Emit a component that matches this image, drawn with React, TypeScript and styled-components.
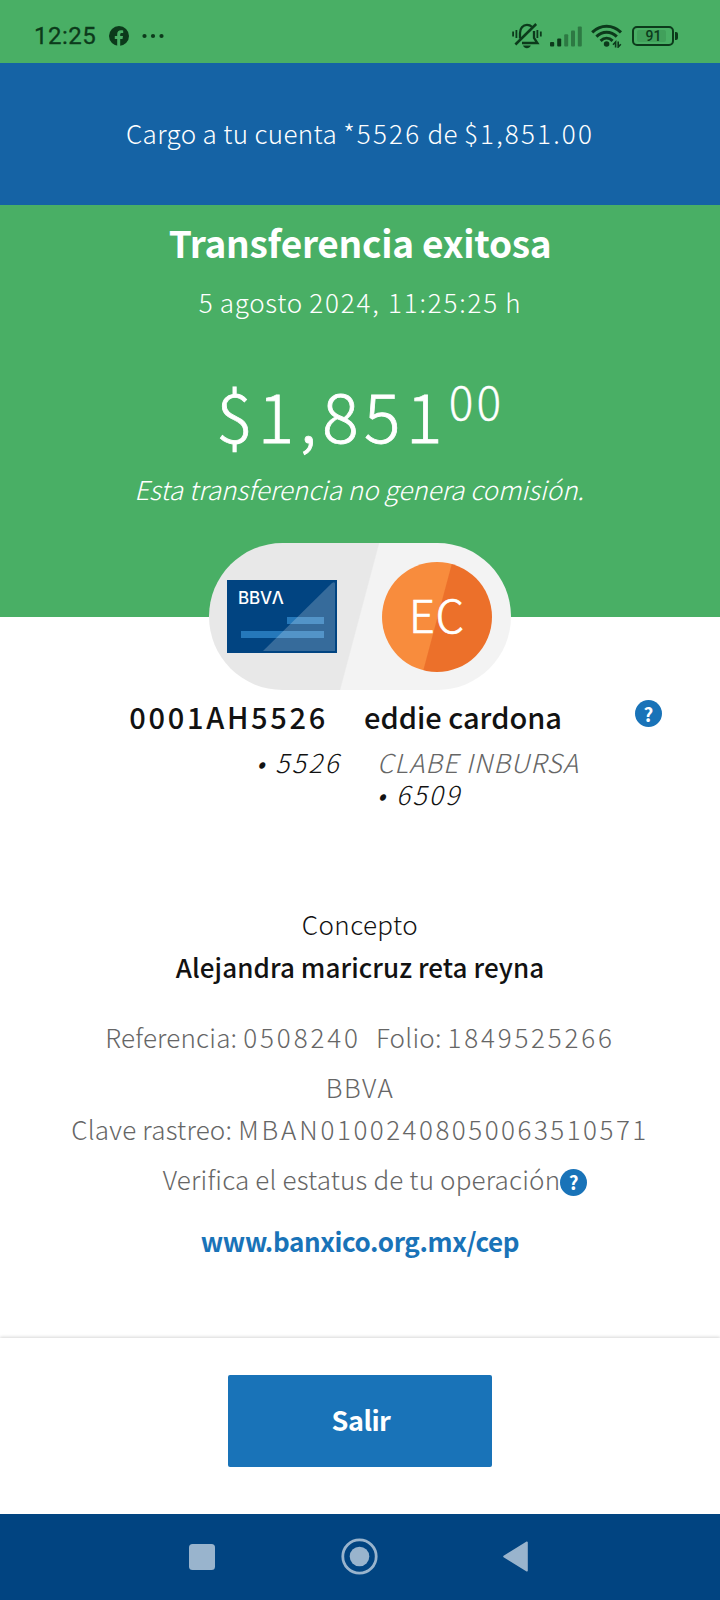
import React from 'react';
import styled, { createGlobalStyle } from 'styled-components';

const GlobalStyle = createGlobalStyle`
  *, *::before, *::after { box-sizing: border-box; }
  body { margin: 0; background: #fff; }
`;

const INK = '#0c3a1b';

const Screen = styled.div`
  width: 720px;
  height: 1600px;
  display: flex;
  flex-direction: column;
  overflow: hidden;
  background: #fff;
  color: #121212;
  font-family: 'Noto Sans CJK JP', 'Open Sans', sans-serif;
  font-size: 26px;
  font-weight: 300;
  line-height: 38px;
  white-space: nowrap;
`;

const StatusBar = styled.header`
  height: 63px;
  flex: none;
  display: flex;
  justify-content: space-between;
  align-items: flex-start;
  padding: 22px 42px 0 34px;
  background: #49af65;
  color: ${INK};
`;

const StatusGroup = styled.div<{ $gap: number }>`
  display: flex;
  align-items: center;
  gap: ${(p) => p.$gap}px;
  height: 28px;
`;

const Clock = styled.span`
  width: 62px;
  font: 400 24px/28px Roboto, sans-serif;
  letter-spacing: 0.5px;
  -webkit-text-stroke: 0.3px currentColor;
`;

const Battery = styled.div`
  position: relative;
  width: 42px;
  height: 20px;
  margin: 0 4px 0 1px;
  padding: 2px 3px;
  border: 2px solid ${INK};
  border-radius: 5px;
  display: flex;

  &::after {
    content: '';
    position: absolute;
    right: -5.5px;
    top: 4px;
    width: 3px;
    height: 8px;
    border-radius: 0 2px 2px 0;
    background: ${INK};
  }
`;

const BatteryLevel = styled.span`
  flex: 0 1 29px;
  display: flex;
  align-items: center;
  justify-content: center;
  border-radius: 2px;
  background: rgba(12, 58, 27, 0.12);
  font: 500 14px/12px Roboto, sans-serif;
  padding-left: 4px;
`;

const Notice = styled.section`
  height: 142px;
  flex: none;
  display: flex;
  align-items: center;
  justify-content: center;
  padding-bottom: 2px;
  background: #1563a5;
  color: #fff;
  letter-spacing: 0.35px;
`;

const Num = styled.span<{ $tracking?: number }>`
  letter-spacing: ${(p) => p.$tracking ?? 2.2}px;
`;

const Caps = styled.span`
  letter-spacing: 2.9px;
`;

const Hero = styled.section`
  height: 412px;
  flex: none;
  display: flex;
  flex-direction: column;
  align-items: center;
  padding-top: 10px;
  background: #49af65;
  color: #fff;
`;

const Title = styled.h1`
  margin: 0;
  font-size: 37px;
  line-height: 54px;
  font-weight: 700;
  letter-spacing: -0.25px;
`;

const DateLine = styled.p`
  margin: 14px 0 0;
  letter-spacing: 0.7px;
`;

const Amount = styled.div`
  display: flex;
  align-items: flex-start;
  margin-top: 43px;
  font-size: 68px;
  line-height: 99px;
  letter-spacing: 5.5px;
  -webkit-text-stroke: 0.8px currentColor;
`;

const Cents = styled.span`
  font-size: 46px;
  line-height: 66px;
  letter-spacing: 3px;
  margin: 3px 0 0 1px;
  -webkit-text-stroke: 0.3px currentColor;
`;

const FeeNote = styled.p`
  margin: 7px 0 0;
  padding-right: 2px;
  font-style: italic;
`;

const Parties = styled.div`
  position: relative;
  flex: none;
  align-self: center;
  display: flex;
  align-items: center;
  justify-content: space-between;
  width: 302px;
  height: 147px;
  margin-top: -74px;
  padding: 0 19px 0 18px;
  border-radius: 74px;
  background: linear-gradient(104.9deg, #e8e8e8 49.7%, #f3f3f3 50.1%);
`;

const BankCard = styled.div`
  position: relative;
  width: 110px;
  height: 73px;
  background: #014481;

  svg { display: block; }
`;

const CardBrand = styled.span`
  position: absolute;
  left: 11px;
  top: 8px;
  color: #fff;
  font: 500 17px/20px Inter, sans-serif;
  letter-spacing: -0.2px;
`;

const Avatar = styled.div`
  width: 110px;
  height: 110px;
  border-radius: 50%;
  display: flex;
  align-items: center;
  justify-content: center;
  background: linear-gradient(105deg, #f88c3d 50%, #ec702a 50.8%);
  color: #fff;
  font-size: 45px;
  letter-spacing: 1px;
  line-height: 110px;
  padding-bottom: 6px;
  -webkit-text-stroke: 0.7px currentColor;
`;

const Accounts = styled.section`
  flex: none;
  display: grid;
  grid-template-columns: 341px 248px auto;
  column-gap: 23px;
  margin-top: 5px;
`;

const Account = styled.div<{ $end?: boolean }>`
  display: flex;
  flex-direction: column;
  align-items: ${(p) => (p.$end ? 'flex-end' : 'flex-start')};
`;

const AccountName = styled.div<{ $tracking: number }>`
  font-size: 29px;
  line-height: 42px;
  font-weight: 500;
  letter-spacing: ${(p) => p.$tracking}px;
`;

const AccountInfo = styled.div`
  padding-top: 9px;
  line-height: 32px;
  font-style: italic;
`;

const AccountNumber = styled.div`
  letter-spacing: 2.5px;
`;

const BankName = styled.div`
  color: #666;
  letter-spacing: 1px;
`;

const SourceWrap = styled(Account)`
  ${AccountName} { padding-right: 13px; }
`;

const TargetWrap = styled(Account)`
  ${AccountInfo} { padding-left: 13px; }
`;

const HelpBadge = styled.span<{ $top?: number }>`
  flex: none;
  display: flex;
  align-items: center;
  justify-content: center;
  width: 27px;
  height: 27px;
  margin-top: ${(p) => p.$top ?? 0}px;
  border-radius: 50%;
  background: #1973b8;
  color: #fff;
  font: 700 19px/27px 'Noto Sans CJK JP', sans-serif;
  padding-bottom: 1px;
`;

const Details = styled.section`
  flex: 1;
  display: flex;
  flex-direction: column;
  align-items: center;
  padding-top: 95px;
  color: #666;
`;

const DetailLine = styled.div<{ $gap?: number; $tracking?: number }>`
  display: flex;
  align-items: center;
  height: 38px;
  margin-top: ${(p) => p.$gap ?? 0}px;
  letter-spacing: ${(p) => p.$tracking ?? 0}px;
  white-space: pre;
`;

const ConceptLabel = styled(DetailLine)`
  color: #121212;
`;

const Concept = styled(DetailLine)`
  color: #121212;
  font-weight: 500;
`;

const Folio = styled.span`
  margin-left: 15px;
`;

const StatusLine = styled(DetailLine)`
  margin-left: 30px;
`;

const CepLink = styled.a`
  margin-top: 24px;
  color: #1973b8;
  font-weight: 700;
  letter-spacing: -0.38px;
  text-decoration: none;
`;

const Footer = styled.footer`
  flex: none;
  height: 176px;
  padding-top: 37px;
  display: flex;
  justify-content: center;
  align-items: flex-start;
  background: #fff;
  box-shadow: 0 -1px 3px rgba(0, 0, 0, 0.16);
`;

const ExitButton = styled.button`
  width: 264px;
  height: 92px;
  padding: 0 0 3px 2px;
  border: 0;
  border-radius: 2px;
  background: #1973b8;
  color: #fff;
  font: 700 27px/39px 'Noto Sans CJK JP', sans-serif;
  letter-spacing: -0.5px;
`;

const NavBar = styled.nav`
  flex: none;
  height: 86px;
  display: flex;
  align-items: center;
  justify-content: space-between;
  padding: 0 192px 1px 189px;
  background: #014481;
  color: #99b4cd;

  svg { display: block; }
`;

const FacebookIcon = () => (
  <svg width="20" height="20" viewBox="0 0 20 20">
    <circle cx="10" cy="10" r="10" fill={INK} />
    <path d="M8.2 20V13H5.8V10H8.2V8.3C8.2 5.6 9.6 4.3 12 4.3C12.9 4.3 13.6 4.4 14.2 4.5V7H12.8C11.6 7 11.2 7.6 11.2 8.4V10H14L13.5 13H11.2V20Z" fill="#49af65" />
  </svg>
);

const MoreIcon = () => (
  <svg width="22" height="6" viewBox="0 0 22 6" fill={INK}>
    <circle cx="2.5" cy="3" r="2.1" />
    <circle cx="11" cy="3" r="2.1" />
    <circle cx="19.5" cy="3" r="2.1" />
  </svg>
);

const MutedBellIcon = () => (
  <svg width="30" height="26" viewBox="0 0 30 26" fill="none" stroke={INK} strokeWidth="2.3">
    <path d="M8 15.5V10C8 5.5 10.8 1.9 15 1.9C17 1.9 18.7 2.6 19.8 3.8M22 8V15L25.4 20H10" />
    <path d="M3.4 21.5L24.2 1" strokeWidth="2.5" />
    <path d="M11 22.6H18.8C18 24.5 16.7 25.2 14.9 25.2C13.1 25.2 11.8 24.5 11 22.6Z" fill={INK} stroke="none" />
    <path d="M1.1 8.5V13.5M4.4 7V15M25.4 7V15M28.8 8.5V13.5" strokeWidth="1.8" />
  </svg>
);

const SignalIcon = () => (
  <svg width="32" height="21" viewBox="0 0 32 21" fill={INK}>
    <rect x="0" y="16" width="4.2" height="4.5" rx="1" />
    <rect x="7.2" y="12.4" width="4" height="8.1" rx="1" />
    <g opacity="0.45">
      <rect x="14.2" y="8.3" width="4" height="12.2" rx="1" />
      <rect x="21" y="4.4" width="4" height="16.1" rx="1" />
      <rect x="27.8" y="0.5" width="4" height="20" rx="1" />
    </g>
  </svg>
);

const WifiIcon = () => (
  <svg width="32" height="24" viewBox="0 0 32 24" fill="none" stroke={INK} strokeWidth="3">
    <path d="M1.2 8.4C9.5 0.3 21.7 0.3 30 8.4" />
    <path d="M5.4 12.6C11.3 6.9 19.9 6.9 25.8 12.6" />
    <path d="M9.6 16.8C13.2 13.4 18 13.4 21.6 16.8" />
    <circle cx="15.6" cy="20" r="2.8" fill={INK} stroke="none" />
    <path d="M24.6 23.6V18L22 20.8M27.2 17.4V23L29.8 20.2" strokeWidth="1.6" />
  </svg>
);

const CardArt = () => (
  <svg width="110" height="73" viewBox="0 0 110 73">
    <rect x="14" y="51" width="83" height="7" fill="#2578ba" />
    <rect x="60" y="37" width="37" height="7" fill="#2578ba" />
    <path d="M36 71L104.5 3.6Q108 0.5 108 4V71Z" fill="#fff" fillOpacity="0.21" />
  </svg>
);

const RecentsIcon = () => (
  <svg width="26" height="26" viewBox="0 0 26 26">
    <rect width="26" height="26" rx="3.5" fill="currentColor" />
  </svg>
);

const HomeIcon = () => (
  <svg width="37" height="37" viewBox="0 0 37 37">
    <circle cx="18.5" cy="18.5" r="16.7" fill="none" stroke="currentColor" strokeWidth="2.8" />
    <circle cx="18.5" cy="18.5" r="9.8" fill="currentColor" />
  </svg>
);

const BackIcon = () => (
  <svg width="25" height="31" viewBox="0 0 25 31">
    <path d="M1 15.5L24 1.3V29.7Z" fill="currentColor" stroke="currentColor" strokeWidth="1.6" strokeLinejoin="round" />
  </svg>
);

export default function App() {
  return (
    <>
      <GlobalStyle />
      <Screen>
        <StatusBar>
          <StatusGroup $gap={13}>
            <Clock>12:25</Clock>
            <FacebookIcon />
            <MoreIcon />
          </StatusGroup>
          <StatusGroup $gap={8.5}>
            <MutedBellIcon />
            <SignalIcon />
            <WifiIcon />
            <Battery>
              <BatteryLevel>91</BatteryLevel>
            </Battery>
          </StatusGroup>
        </StatusBar>

        <Notice>
          <div>
            Cargo a tu cuenta <Num>*5526</Num> de <Num>$1,851.00</Num>
          </div>
        </Notice>

        <Hero>
          <Title>Transferencia exitosa</Title>
          <DateLine>
            5 agosto <Num $tracking={1.8}>2024, 11:25:25</Num> h
          </DateLine>
          <Amount>
            $1,851<Cents>00</Cents>
          </Amount>
          <FeeNote>Esta transferencia no genera comisión.</FeeNote>
        </Hero>

        <Parties>
          <BankCard>
            <CardArt />
            <CardBrand>BBVΛ</CardBrand>
          </BankCard>
          <Avatar>EC</Avatar>
        </Parties>

        <Accounts>
          <SourceWrap $end>
            <AccountName $tracking={2.7}>0001AH5526</AccountName>
            <AccountInfo>
              <AccountNumber>• 5526</AccountNumber>
            </AccountInfo>
          </SourceWrap>
          <TargetWrap>
            <AccountName $tracking={0}>eddie cardona</AccountName>
            <AccountInfo>
              <BankName>CLABE INBURSA</BankName>
              <AccountNumber>• 6509</AccountNumber>
            </AccountInfo>
          </TargetWrap>
          <HelpBadge $top={5}>?</HelpBadge>
        </Accounts>

        <Details>
          <ConceptLabel $tracking={0.4}>Concepto</ConceptLabel>
          <Concept $gap={5} $tracking={0.07}>Alejandra maricruz reta reyna</Concept>
          <DetailLine $gap={32} $tracking={0.2}>
            <span>
              Referencia: <Num $tracking={2.9}>0508240</Num>
            </span>
            <Folio>
              Folio: <Num $tracking={2.8}>1849525266</Num>
            </Folio>
          </DetailLine>
          <DetailLine $gap={12} $tracking={1.5}>BBVA</DetailLine>
          <DetailLine $gap={4} $tracking={0.2}>
            Clave rastreo: <Caps>MBAN</Caps>
            <Num $tracking={2.5}>01002408050063510571</Num>
          </DetailLine>
          <StatusLine $gap={12} $tracking={0.17}>
            Verifica el estatus de tu operación
            <HelpBadge $top={6}>?</HelpBadge>
          </StatusLine>
          <CepLink>www.banxico.org.mx/cep</CepLink>
        </Details>

        <Footer>
          <ExitButton>Salir</ExitButton>
        </Footer>

        <NavBar>
          <RecentsIcon />
          <HomeIcon />
          <BackIcon />
        </NavBar>
      </Screen>
    </>
  );
}
